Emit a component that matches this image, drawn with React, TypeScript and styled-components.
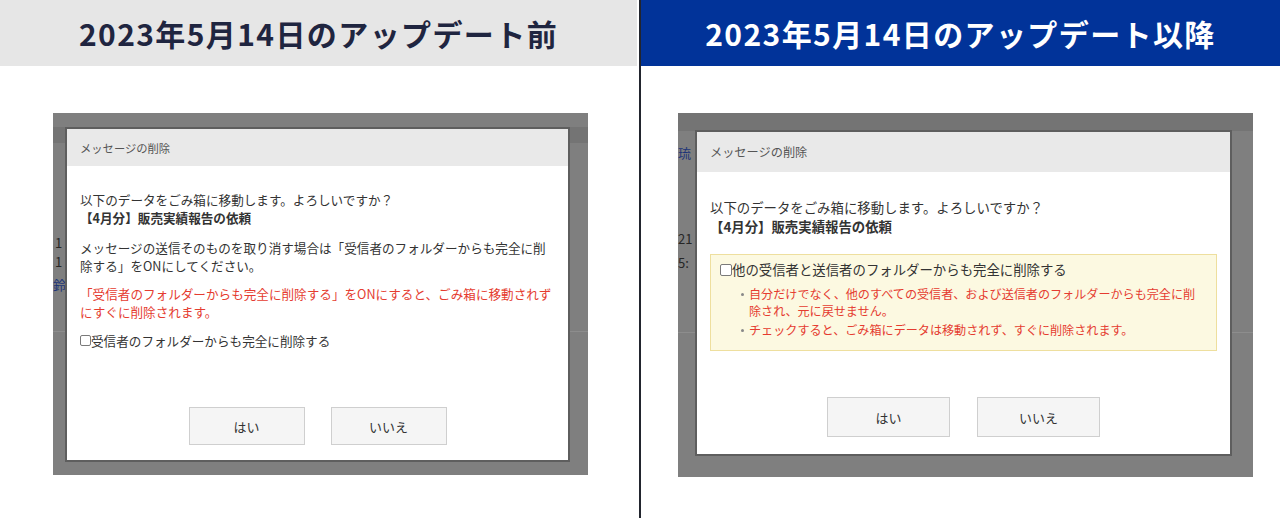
import styled, { createGlobalStyle, ThemeProvider } from "styled-components"

const GlobalStyle = createGlobalStyle`
  html, body {
    margin: 0;
    padding: 0;
    background: #fff;
  }
  body {
    font-family: "Noto Sans CJK JP", "Noto Sans", sans-serif;
  }
  * { box-sizing: border-box; }
`

type Dims = {
  modalX: number
  modalY: number
  modalW: number
  modalH: number
  headerH: number
  titleSize: number
  fs: number
  lh: number
  padX: number
  padTop: number
  btnW: number
  btnH: number
  btnGap: number
  btnBottom: number
  check: number
}

const before: Dims = {
  modalX: 12, modalY: 14, modalW: 505, modalH: 335,
  headerH: 37, titleSize: 11.3, fs: 12.6, lh: 17.5,
  padX: 13, padTop: 25,
  btnW: 116, btnH: 38, btnGap: 26, btnBottom: 15, check: 11,
}

const after: Dims = {
  modalX: 17, modalY: 17, modalW: 537, modalH: 326,
  headerH: 40, titleSize: 12.2, fs: 13.4, lh: 19,
  padX: 13, padTop: 26,
  btnW: 123, btnH: 40, btnGap: 27, btnBottom: 17, check: 12,
}

const Page = styled.div`
  width: 1280px;
  height: 518px;
  display: flex;
  overflow: hidden;
  background: #fff;
`

const Panel = styled.section`
  width: 639px;
  display: flex;
  flex-direction: column;
`

const Divider = styled.div`
  width: 2px;
  flex-shrink: 0;
  background: #22252e;
`

const Heading = styled.h1<{ $dark?: boolean }>`
  margin: 0 ${p => (p.$dark ? 0 : 2)}px 0 0;
  height: 66px;
  display: flex;
  align-items: center;
  justify-content: center;
  font-size: 30px;
  font-weight: 700;
  letter-spacing: 1.4px;
  background: ${p => (p.$dark ? "#013399" : "#e6e6e6")};
  color: ${p => (p.$dark ? "#fff" : "#1f2540")};
`

const Backdrop = styled.div<{ $x: number; $w: number; $h: number }>`
  position: relative;
  margin: 47px 0 0 ${p => p.$x}px;
  width: ${p => p.$w}px;
  height: ${p => p.$h}px;
  background: #7f7f7f;
  overflow: hidden;
`

// the dimmed page that peeks out round the dialog
const BehindBar = styled.div<{ $top: number; $h: number }>`
  margin-top: ${p => p.$top}px;
  height: ${p => p.$h}px;
  background: #747474;
`

const BehindRow = styled.div<{ $gap: number; $indent: number; $blue?: boolean }>`
  margin-top: ${p => p.$gap}px;
  padding-left: ${p => p.$indent}px;
  height: 19px;
  line-height: 19px;
  font-size: 13px;
  white-space: nowrap;
  color: ${p => (p.$blue ? "#1d3478" : "#262626")};
`

const BehindLine = styled.div<{ $gap: number }>`
  margin-top: ${p => p.$gap}px;
  height: 1px;
  background: #8d8d8d;
`

const Modal = styled.div`
  position: absolute;
  left: ${p => p.theme.modalX}px;
  top: ${p => p.theme.modalY}px;
  width: ${p => p.theme.modalW}px;
  height: ${p => p.theme.modalH}px;
  border: 2px solid #5e5e5e;
  background: #fff;
  display: flex;
  flex-direction: column;
`

const ModalHeader = styled.div`
  height: ${p => p.theme.headerH}px;
  flex-shrink: 0;
  display: flex;
  align-items: center;
  padding-left: ${p => p.theme.padX}px;
  background: #e9e9e9;
  color: #555;
  font-size: ${p => p.theme.titleSize}px;
`

const ModalBody = styled.div`
  flex: 1;
  padding: ${p => p.theme.padTop}px ${p => p.theme.padX}px 0;
  font-size: ${p => p.theme.fs}px;
  line-height: ${p => p.theme.lh}px;
  color: #333;
  white-space: nowrap;
`

const Para = styled.p<{ $gap?: number; $red?: boolean }>`
  margin: ${p => p.$gap ?? 0}px 0 0;
  color: ${p => (p.$red ? "#e53c30" : "inherit")};
`

const Strong = styled.span`
  font-weight: 700;
`

const CheckRow = styled.label<{ $gap?: number }>`
  margin-top: ${p => p.$gap ?? 0}px;
  display: flex;
  align-items: center;
`

const Check = styled.span`
  width: ${p => p.theme.check}px;
  height: ${p => p.theme.check}px;
  flex-shrink: 0;
  border: 1px solid #7a7a7a;
  border-radius: 2px;
  background: #fff;
`

const Notice = styled.div`
  margin-top: 18px;
  border: 1px solid #eedf9e;
  background: #fcf9e1;
  padding: 5px 9px 11px;
`

const Bullets = styled.ul`
  list-style: none;
  margin: 7px 0 0;
  padding: 0 0 0 29px;
  font-size: 12.1px;
  line-height: 16.5px;
  color: #e53c30;
`

const Bullet = styled.li`
  position: relative;
  & + & {
    margin-top: 3px;
  }
  &::before {
    content: "";
    position: absolute;
    left: -8px;
    top: 7px;
    width: 3px;
    height: 3px;
    border-radius: 50%;
    background: #888;
  }
`

const Footer = styled.div`
  display: flex;
  justify-content: center;
  gap: ${p => p.theme.btnGap}px;
  padding-bottom: ${p => p.theme.btnBottom}px;
`

const Button = styled.button`
  width: ${p => p.theme.btnW}px;
  height: ${p => p.theme.btnH}px;
  border: 1px solid #cfcfcf;
  background: #f5f5f5;
  color: #333;
  font-family: inherit;
  font-size: 13px;
  padding: 0;
`

function Buttons() {
  return (
    <Footer>
      <Button>はい</Button>
      <Button>いいえ</Button>
    </Footer>
  )
}

function OldDialog() {
  return (
    <Modal>
      <ModalHeader>メッセージの削除</ModalHeader>
      <ModalBody>
        <Para>
          以下のデータをごみ箱に移動します。よろしいですか？<br />
          <Strong>【4月分】販売実績報告の依頼</Strong>
        </Para>
        <Para $gap={13}>
          メッセージの送信そのものを取り消す場合は「受信者のフォルダーからも完全に削<br />
          除する」をONにしてください。
        </Para>
        <Para $gap={11} $red>
          「受信者のフォルダーからも完全に削除する」をONにすると、ごみ箱に移動されず<br />
          にすぐに削除されます。
        </Para>
        <CheckRow $gap={12}>
          <Check />
          受信者のフォルダーからも完全に削除する
        </CheckRow>
      </ModalBody>
      <Buttons />
    </Modal>
  )
}

function NewDialog() {
  return (
    <Modal>
      <ModalHeader>メッセージの削除</ModalHeader>
      <ModalBody>
        <Para>
          以下のデータをごみ箱に移動します。よろしいですか？<br />
          <Strong>【4月分】販売実績報告の依頼</Strong>
        </Para>
        <Notice>
          <CheckRow>
            <Check />
            他の受信者と送信者のフォルダーからも完全に削除する
          </CheckRow>
          <Bullets>
            <Bullet>
              自分だけでなく、他のすべての受信者、および送信者のフォルダーからも完全に削<br />
              除され、元に戻せません。
            </Bullet>
            <Bullet>チェックすると、ごみ箱にデータは移動されず、すぐに削除されます。</Bullet>
          </Bullets>
        </Notice>
      </ModalBody>
      <Buttons />
    </Modal>
  )
}

export default function App() {
  return (
    <>
      <GlobalStyle />
      <Page>
        <ThemeProvider theme={before}>
          <Panel>
            <Heading>2023年5月14日のアップデート前</Heading>
            <Backdrop $x={53} $w={535} $h={362}>
              <BehindBar $top={14} $h={16} />
              <BehindRow $gap={90} $indent={2}>1</BehindRow>
              <BehindRow $gap={0} $indent={2}>1</BehindRow>
              <BehindRow $gap={4} $indent={0} $blue>鈴</BehindRow>
              <BehindLine $gap={37} />
              <OldDialog />
            </Backdrop>
          </Panel>
        </ThemeProvider>
        <Divider />
        <ThemeProvider theme={after}>
          <Panel>
            <Heading $dark>2023年5月14日のアップデート以降</Heading>
            <Backdrop $x={37} $w={575} $h={364}>
              <BehindBar $top={0} $h={18} />
              <BehindRow $gap={12} $indent={-6} $blue>琉</BehindRow>
              <BehindRow $gap={67} $indent={0}>21</BehindRow>
              <BehindRow $gap={5} $indent={0}>5:</BehindRow>
              <BehindLine $gap={60} />
              <NewDialog />
            </Backdrop>
          </Panel>
        </ThemeProvider>
      </Page>
    </>
  )
}
